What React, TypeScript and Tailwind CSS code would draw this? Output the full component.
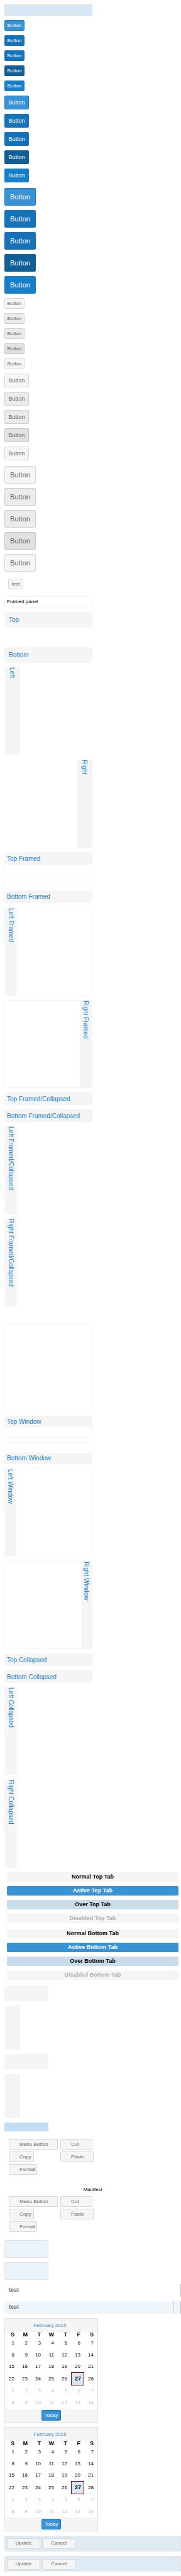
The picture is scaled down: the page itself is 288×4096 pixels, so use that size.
import React from "react";

const sans = "font-['Liberation_Sans',Arial,sans-serif]";

type Size = "small" | "medium" | "large";

const sizes: Record<Size, string> = {
  small: "h-[17px] w-8 text-[8px]",
  medium: "h-[22px] w-[39px] text-[9px]",
  large: "h-7 w-[50px] text-[11px]",
};

const primaryStates = [
  "border-[#157fcc] bg-[#3892d4] text-white",
  "border-[#1473ba] bg-[#1473ba] text-white",
  "border-[#1473ba] bg-[#1473ba] text-white",
  "border-[#105f99] bg-[#105f99] text-white",
  "border-[#157fcc] bg-[#157fcc] text-white",
];

const neutral = "border-[#d8d8d8] bg-[#f5f5f5] text-[#666]";

const neutralStates = [
  neutral,
  "border-[#cfcfcf] bg-[#ebebeb] text-[#666]",
  "border-[#cfcfcf] bg-[#ebebeb] text-[#666]",
  "border-[#c6c6c6] bg-[#e1e1e1] text-[#666]",
  neutral,
];

function ButtonGroup({ size, states, className = "" }: { size: Size; states: string[]; className?: string }) {
  return (
    <div className={`flex flex-col items-start gap-[7px] ${className}`}>
      {states.map((tone, i) => (
        <button
          key={i}
          type="button"
          className={`flex items-center justify-center rounded-[2px] border leading-none ${sizes[size]} ${tone}`}
        >
          Button
        </button>
      ))}
    </div>
  );
}

function PlainPanel({ title, side }: { title: string; side: "top" | "bottom" | "left" | "right" }) {
  const text = "bg-[#f5f5f5] text-[10px] text-[#157fcc]";
  if (side === "top" || side === "bottom") {
    return (
      <section className={`flex w-[140px] ${side === "top" ? "flex-col" : "flex-col-reverse"}`}>
        <h2 className={`flex h-[25px] items-center px-[7px] ${text}`}>{title}</h2>
        <div className="h-3" />
      </section>
    );
  }
  return (
    <section className={`flex h-[140px] w-[140px] ${side === "left" ? "" : "justify-end"}`}>
      <h2 className={`flex w-[25px] items-center py-[7px] [writing-mode:vertical-rl] ${text}`}>{title}</h2>
    </section>
  );
}

const frameDirection = {
  top: "flex-col",
  bottom: "flex-col-reverse",
  left: "flex-row",
  right: "flex-row-reverse",
};

function FramedPanel({
  title,
  side,
  kind,
}: {
  title: string;
  side: "top" | "bottom" | "left" | "right";
  kind: "frame" | "window";
}) {
  const horizontal = side === "top" || side === "bottom";
  const box = horizontal ? (kind === "frame" ? "h-[37px]" : "h-[35px]") : "h-[140px]";
  const head = horizontal
    ? kind === "frame"
      ? "h-[19px] px-[3px]"
      : "h-[17px] px-[3px]"
    : kind === "frame"
      ? "w-[19px] py-[3px] [writing-mode:vertical-rl]"
      : "w-[17px] py-[3px] [writing-mode:vertical-rl]";
  return (
    <section className={`flex w-[140px] overflow-hidden rounded-[3px] border border-[#f5f5f5] ${frameDirection[side]} ${box}`}>
      <h2 className={`flex shrink-0 items-center bg-[#f5f5f5] text-[10px] text-[#157fcc] ${head}`}>{title}</h2>
      <div className="flex-1 bg-white" />
    </section>
  );
}

function Collapsed({ title, vertical = false }: { title: string; vertical?: boolean }) {
  return (
    <h2
      className={`flex items-center rounded-[3px] bg-[#f5f5f5] text-[10px] text-[#157fcc] ${
        vertical ? "h-[140px] w-5 py-1 [writing-mode:vertical-rl]" : "h-5 w-[140px] px-1"
      }`}
    >
      {title}
    </h2>
  );
}

const tabStates = [
  ["Normal", "bg-[#f5f5f5] text-black"],
  ["Active", "bg-[#3892d4] text-white"],
  ["Over", "bg-[#c8dcea] text-black"],
  ["Disabled", "bg-[#f5f5f5] text-[#b2b2b2]"],
];

function Tabs({ place }: { place: "Top" | "Bottom" }) {
  return (
    <div role="tablist" className="mx-1 mb-[2px] flex flex-col gap-[7px]">
      {tabStates.map(([state, tone]) => (
        <button
          key={state}
          type="button"
          role="tab"
          className={`flex h-[15px] items-center justify-center rounded-[2px] text-[9px] leading-none font-bold ${tone}`}
        >
          {state} {place} Tab
        </button>
      ))}
    </div>
  );
}

const toolbarItems = [
  ["Menu Button", "w-[78px]"],
  ["Cut", "w-[51px]"],
  ["Copy", "w-10"],
  ["Paste", "w-[53px]"],
  ["Format", "w-[45px]"],
];

function ToolbarButtons() {
  return (
    <div className="grid grid-cols-[79px_1fr] gap-[3px] px-[7px] pb-[6px]">
      {toolbarItems.map(([label, width]) => (
        <button
          key={label}
          type="button"
          className={`flex h-[17px] items-center rounded-[2px] border pl-4 text-[8px] leading-none whitespace-nowrap ${neutral} ${width}`}
        >
          {label}
        </button>
      ))}
    </div>
  );
}

const weeks = [
  [1, 2, 3, 4, 5, 6, 7],
  [8, 9, 10, 11, 12, 13, 14],
  [15, 16, 17, 18, 19, 20, 21],
  [22, 23, 24, 25, 26, 27, 28],
  [1, 2, 3, 4, 5, 6, 7],
  [8, 9, 10, 11, 12, 13, 14],
];

function Calendar() {
  return (
    <section className="flex w-[149px] flex-col border border-[#e1e1e1] bg-white">
      <h3 className="flex h-[21px] items-center justify-center bg-[#f5f5f5] pr-1 text-[8px] text-[#3892d4]">
        February 2015
      </h3>
      <table className="h-[122px] w-full table-fixed border-collapse text-right text-[8px] leading-none">
        <thead>
          <tr>
            {["S", "M", "T", "W", "T", "F", "S"].map((d, i) => (
              <th key={i} scope="col" className="py-0 pr-[6px] pl-0 text-[9px] leading-none font-bold">
                {d}
              </th>
            ))}
          </tr>
        </thead>
        <tbody>
          {weeks.map((week, w) => (
            <tr key={w}>
              {week.map((day) => (
                <td
                  key={day}
                  className={
                    w === 3 && day === 27
                      ? "bg-[#d6e8f6] py-0 pr-[5px] pl-0 text-[9px] leading-none font-bold outline outline-1 -outline-offset-1 outline-[#8b0000]"
                      : w > 3
                        ? "py-0 pr-[6px] pl-0 text-[#bfbfbf]"
                        : "py-0 pr-[6px] pl-0"
                  }
                >
                  {day}
                </td>
              ))}
            </tr>
          ))}
        </tbody>
      </table>
      <div className="flex h-[21px] items-center justify-center bg-[#f5f5f5]">
        <button
          type="button"
          className={`flex h-[17px] w-[31px] items-center justify-center rounded-[2px] border text-[8px] leading-none ${primaryStates[0]}`}
        >
          Today
        </button>
      </div>
    </section>
  );
}

function RowEditor({ className }: { className: string }) {
  return (
    <div className={`flex h-[25px] items-center gap-[3px] border-x border-[#e1e1e1] bg-[#dfeaf2] px-[3px] ${className}`}>
      {["Update", "Cancel"].map((label) => (
        <button
          key={label}
          type="button"
          className={`flex h-[17px] w-[53px] items-center justify-center rounded-[2px] border text-[8px] leading-none ${neutral}`}
        >
          {label}
        </button>
      ))}
    </div>
  );
}

export default function App() {
  return (
    <main className={`flex flex-col gap-[7px] bg-white py-[7px] pl-[7px] text-black ${sans}`}>
      <div className="h-[18px] w-[140px] border border-[#e1e1e1] bg-[#d6e8f6]" />

      <ButtonGroup size="small" states={primaryStates} />
      <ButtonGroup size="medium" states={primaryStates} className="mb-[2px]" />
      <ButtonGroup size="large" states={primaryStates} />
      <ButtonGroup size="small" states={neutralStates} />
      <ButtonGroup size="medium" states={neutralStates} className="mb-[2px]" />
      <ButtonGroup size="large" states={neutralStates} />

      <div className="flex px-[6px] py-1">
        <button
          type="button"
          className={`flex h-[17px] w-6 items-center justify-center rounded-[2px] border text-[8px] leading-none ${neutral}`}
        >
          test
        </button>
      </div>

      <div className="flex h-[18px] w-[140px] items-center rounded-[3px] border border-[#f5f5f5] px-[3px] text-[8px]">
        Framed panel
      </div>

      <PlainPanel title="Top" side="top" />
      <PlainPanel title="Bottom" side="bottom" />
      <PlainPanel title="Left" side="left" />
      <PlainPanel title="Right" side="right" />

      <FramedPanel title="Top Framed" side="top" kind="frame" />
      <FramedPanel title="Bottom Framed" side="bottom" kind="frame" />
      <FramedPanel title="Left Framed" side="left" kind="frame" />
      <FramedPanel title="Right Framed" side="right" kind="frame" />
      <Collapsed title="Top Framed/Collapsed" />
      <Collapsed title="Bottom Framed/Collapsed" />
      <Collapsed title="Left Framed/Collapsed" vertical />
      <Collapsed title="Right Framed/Collapsed" vertical />

      <div className="pt-[19px]">
        <div className="h-[140px] w-[140px] rounded-[3px] border border-[#f5f5f5]" />
      </div>

      <FramedPanel title="Top Window" side="top" kind="window" />
      <FramedPanel title="Bottom Window" side="bottom" kind="window" />
      <FramedPanel title="Left Window" side="left" kind="window" />
      <FramedPanel title="Right Window" side="right" kind="window" />
      <Collapsed title="Top Collapsed" />
      <Collapsed title="Bottom Collapsed" />
      <Collapsed title="Left Collapsed" vertical />
      <Collapsed title="Right Collapsed" vertical />

      <Tabs place="Top" />
      <Tabs place="Bottom" />

      <div className="h-[25px] w-[70px] bg-[#f5f5f5]" />
      <div className="h-[70px] w-[25px] bg-[#f5f5f5]" />
      <div className="h-[25px] w-[70px] bg-[#f5f5f5]" />
      <div className="h-[70px] w-[25px] bg-[#f5f5f5]" />
      <div className="h-[14px] w-[70px] bg-[#c2ddf1]" />

      <div role="toolbar" className="pt-[5px]">
        <ToolbarButtons />
      </div>
      <div role="toolbar">
        <h3 className="flex h-[21px] items-center justify-center text-[8px]">Manifest</h3>
        <ToolbarButtons />
      </div>

      <div className="h-7 w-[70px] rounded-[2px] border border-[#e1e1e1] bg-[#eaf3fa]" />
      <div className="h-7 w-[70px] rounded-[2px] border border-[#e1e1e1] bg-[#eaf3fa]" />

      <div className="flex h-5 items-center border-r border-[#c0c0c0] px-[7px] text-[9px] font-bold text-[#666]">test</div>
      <div className="flex h-5 items-center border-r border-[#c0c0c0] bg-[#eef5fb] pl-[7px] text-[9px] font-bold text-[#666]">
        <span className="flex-1">test</span>
        <span className="h-full w-3 border-l border-[#c0c0c0]" />
      </div>

      <Calendar />
      <Calendar />

      <RowEditor className="rounded-b-[3px] border-b" />
      <RowEditor className="rounded-t-[3px] border-t" />
    </main>
  );
}
